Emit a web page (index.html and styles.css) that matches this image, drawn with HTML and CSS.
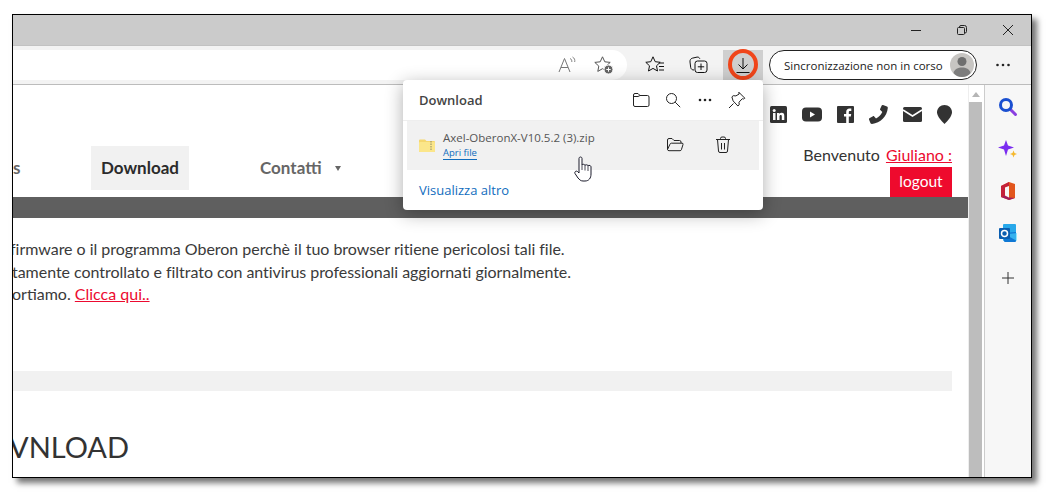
FILE: index.html
```html
<!DOCTYPE html>
<html lang="it">
<head>
<meta charset="utf-8">
<title>Download</title>
<link rel="stylesheet" href="styles.css">
</head>
<body>
<div class="window">
  <div class="titlebar">
    <span class="winbtn"><svg width="12" height="12" viewBox="0 0 12 12"><path d="M1 6.500h10" stroke="#222" fill="none"/></svg></span>
    <span class="winbtn"><svg width="12" height="12" viewBox="0 0 12 12"><path d="M1.500 4.500a1 1 0 0 1 1-1h5a1 1 0 0 1 1 1v5a1 1 0 0 1-1 1h-5a1 1 0 0 1-1-1zM3.500 3.500v-.5a1.500 1.500 0 0 1 1.500-1.500h3.500a2 2 0 0 1 2 2v4a1.500 1.500 0 0 1-1.500 1.500h-.5" stroke="#222" fill="none"/></svg></span>
    <span class="winbtn"><svg width="12" height="12" viewBox="0 0 12 12"><path d="M1 1l10 10M11 1L1 11" stroke="#222" fill="none"/></svg></span>
  </div>
  <div class="toolbar">
    <div class="omnibox">
      <span class="omni-btn"><svg width="22" height="20" viewBox="0 0 22 20" fill="none" stroke="#777"><path d="M2 17L7.500 3.500 13 17M4 12.500h7"/><path d="M13 3.500c1.500.5 2 2 1.800 3.500M15.500 2c2 1 2.600 3 2.200 5" stroke-width=".9"/></svg></span>
      <span class="omni-btn"><svg width="22" height="20" viewBox="0 0 22 20" fill="none"><path d="M9.500 1.800l2.300 5 5.400.6-4 3.700 1 5.300-4.700-2.700-4.700 2.700 1-5.300-4-3.700 5.400-.6z" stroke="#555"/><circle cx="15.500" cy="14.500" r="4.500" fill="#666" stroke="#fff"/><path d="M15.500 12.300v4.400M13.300 14.500h4.400" stroke="#fff"/></svg></span>
    </div>
    <span class="tool-btn"><svg width="20" height="18" viewBox="0 0 20 18" fill="none" stroke="#111"><path d="M8 .8l2.200 4.900 5 .6-3.700 3.500 1 5.200L8 12.400 3.500 15l1-5.200L.8 6.300l5-.6z"/><path d="M14 7h5M14 10.500h5M14 14h5"/></svg></span>
    <span class="tool-btn"><svg width="20" height="18" viewBox="0 0 20 18" fill="none" stroke="#111"><path d="M5 14c-2 0-3-1-3.300-2.500L1 6c-.2-2 .6-3.300 2.300-3.800L8 1.100c1.300-.2 2.400.4 2.800 1.600"/><rect x="6" y="5" width="12" height="11.500" rx="2.500"/><path d="M12 7.500v6.500M8.800 10.800h6.400"/></svg></span>
    <span class="tool-btn is-active">
      <svg width="20" height="20" viewBox="0 0 20 20" fill="none" stroke="#111"><path d="M10 3v11M5.500 9.500L10 14l4.500-4.500M3.500 17.500h13"/></svg>
      <span class="ring"></span>
    </span>
    <div class="sync">
      <span class="sync-label">Sincronizzazione non in corso</span>
      <span class="avatar"><svg width="24" height="24" viewBox="0 0 24 24"><circle cx="12" cy="12" r="12" fill="#c7c5c2"/><circle cx="12" cy="8.500" r="4.500" fill="#6f6f6f"/><path d="M3.500 20c1-4 4.500-5.500 8.500-5.500s7.500 1.500 8.500 5.500c-2 2.500-5 4-8.500 4s-6.500-1.500-8.500-4z" fill="#7d7d7d"/></svg></span>
    </div>
    <span class="tool-btn"><svg width="16" height="4" viewBox="0 0 16 4"><circle cx="2.500" cy="2" r="1.300" fill="#222"/><circle cx="8" cy="2" r="1.300" fill="#222"/><circle cx="13.500" cy="2" r="1.300" fill="#222"/></svg></span>
  </div>

  <div class="body">
    <main class="page">
      <div class="socials">
        <svg class="soc" width="17" height="17" viewBox="0 0 17 17"><rect width="17" height="17" rx="1.500" fill="#333"/><rect x="3" y="7" width="2.500" height="7" fill="#fff"/><circle cx="4.200" cy="4.500" r="1.500" fill="#fff"/><path d="M7 7h2.400v1c.5-.8 1.300-1.200 2.300-1.200 1.900 0 2.600 1.200 2.600 3.200v4h-2.500v-3.600c0-1-.3-1.500-1.100-1.500s-1.200.6-1.200 1.500V14H7z" fill="#fff"/></svg>
        <svg class="soc" width="20" height="15" viewBox="0 0 20 15"><rect width="20" height="14" y=".5" rx="4" fill="#333"/><path d="M8 4.500l5 3-5 3z" fill="#fff"/></svg>
        <svg class="soc" width="17" height="17" viewBox="0 0 17 17"><rect width="17" height="17" rx="1" fill="#333"/><path d="M9.200 17v-6.500H7V8h2.200V6c0-2.200 1.300-3.400 3.300-3.400h1.800V5H13c-.9 0-1.200.5-1.200 1.200V8h2.400l-.4 2.500h-2V17z" fill="#fff"/></svg>
        <svg class="soc" width="19" height="19" viewBox="0 0 19 19"><path d="M14 0l4 1.500c.6.300.9.800.8 1.500C18 11.500 11.500 18 3 19c-.7 0-1.200-.3-1.500-.8L0 14.500c-.2-.5 0-1 .4-1.300l3.600-2c.4-.2.900-.1 1.200.2l1.800 2c2.800-1.300 5-3.700 6.300-6.500l-2-1.800c-.3-.3-.4-.8-.2-1.200L12.700.5c.3-.4.800-.6 1.300-.5z" fill="#333"/></svg>
        <svg class="soc" width="19" height="15" viewBox="0 0 19 15"><rect width="19" height="15" rx="1.500" fill="#333"/><path d="M0 3l9.500 6L19 3" fill="none" stroke="#fff" stroke-width="1.500"/></svg>
        <svg class="soc" width="15" height="19" viewBox="0 0 15 19"><path d="M7.500 0C11.600 0 15 3.200 15 7.300c0 4-4.500 8.800-7.500 11.700C4.500 16.100 0 11.300 0 7.300 0 3.200 3.400 0 7.500 0z" fill="#333"/></svg>
      </div>
      <div class="masthead">
        <nav class="nav">
          <a class="nav-frag">s</a>
          <a class="nav-item is-current">Download</a>
          <a class="nav-item nav-contact">Contatti <span class="caret"></span></a>
        </nav>
        <div class="user">
          <div class="welcome">Benvenuto <a class="link">Giuliano :</a></div>
          <a class="logout">logout</a>
        </div>
      </div>
      <div class="darkbar"></div>
      <div class="notice">
        <div class="line line-1">firmware o il programma Oberon perchè il tuo browser ritiene pericolosi tali file.</div>
        <div class="line line-2">tamente controllato e filtrato con antivirus professionali aggiornati giornalmente.</div>
        <div class="line line-3">ortiamo. <a class="link">Clicca qui..</a></div>
      </div>
      <div class="greybar"></div>
      <h1 class="heading">VNLOAD</h1>
    </main>
    <div class="scrollbar">
      <span class="arrow"></span>
      <span class="thumb"></span>
    </div>
    <aside class="sidebar">
      <svg width="20" height="20" viewBox="0 0 20 20" fill="none"><path d="M12 12l5.500 5.500" stroke="#8b3fe0" stroke-width="3" stroke-linecap="round"/><circle cx="8" cy="8" r="5.500" stroke="#1a4fd0" stroke-width="3"/></svg>
      <svg width="20" height="20" viewBox="0 0 20 20"><path d="M8 1l2 5.500L16 8.500 10 10.500 8 17l-2-6.500L0 8.500 6 6.500z" fill="#7a2cf0"/><path d="M15.500 11.500l1 2.500 2.500 1-2.500 1-1 2.500-1-2.500-2.500-1 2.500-1z" fill="#f5b82e"/></svg>
      <svg width="20" height="20" viewBox="0 0 20 20"><path d="M11 1l6 2v14l-6 2-8-3V5z" fill="#e2561d"/><path d="M11 1L3 5v11l4-1.500V6.500L11 5z" fill="#c4213a"/><path d="M3 16l8 3 6-2-6-.5-4-2z" fill="#a01a5c"/><path d="M7 6.500L11 5v11.500l-4-2z" fill="#f7f7f7"/></svg>
      <svg width="20" height="20" viewBox="0 0 20 20"><rect x="5" y="1" width="13" height="17" rx="1" fill="#28a8ea"/><path d="M6 10l12-1v9a1 1 0 0 1-1 1H7a1 1 0 0 1-1-1z" fill="#0f78d4"/><path d="M10 11l9-1v8l-9-5z" fill="#50d9ff" opacity=".6"/><rect x="1" y="5" width="11" height="11" rx="1" fill="#0a5eb0"/><circle cx="6.500" cy="10.500" r="3" fill="none" stroke="#fff" stroke-width="1.500"/></svg>
      <svg width="14" height="14" viewBox="0 0 14 14"><path d="M7 1v12M1 7h12" stroke="#333" fill="none"/></svg>
    </aside>
  </div>

  <section class="popup">
    <header class="popup-head">
      <span class="popup-title">Download</span>
      <span class="pop-btn"><svg width="18" height="16" viewBox="0 0 18 16" fill="none" stroke="#222"><path d="M1.500 4V3a1.500 1.500 0 0 1 1.500-1.500h3L8 3.500h7.500A1.500 1.500 0 0 1 17 5v8a1.500 1.500 0 0 1-1.500 1.500H3A1.500 1.500 0 0 1 1.500 13z"/><path d="M1.500 4.500H6L8 3.500"/></svg></span>
      <span class="pop-btn"><svg width="16" height="16" viewBox="0 0 16 16" fill="none" stroke="#222"><circle cx="6.500" cy="6.500" r="5"/><path d="M10.200 10.200l5 5"/></svg></span>
      <span class="pop-btn"><svg width="14" height="4" viewBox="0 0 14 4"><circle cx="2" cy="2" r="1.300" fill="#222"/><circle cx="7" cy="2" r="1.300" fill="#222"/><circle cx="12" cy="2" r="1.300" fill="#222"/></svg></span>
      <span class="pop-btn"><svg width="18" height="18" viewBox="0 0 18 18" fill="none" stroke="#222"><path d="M10.800 1.200l6 6-1.200.8-1.300-.3-3.300 3.500.2 2.600-1.300 1.200L5.200 10l-.1-.1-1.200-4 1.300-1.200 2.700.2L11.200 3l-.4-1.800zM5.500 12.500L1 17"/></svg></span>
    </header>
    <div class="dl-row">
      <svg class="zip" width="16" height="14" viewBox="0 0 16 14"><path d="M0 2.500A1 1 0 0 1 1 1.500h5l1.500 1.500H15a1 1 0 0 1 1 1V13a1 1 0 0 1-1 1H1a1 1 0 0 1-1-1z" fill="#f5d76e"/><rect x="0" y="4" width="16" height="10" rx="1" fill="#fbe68a"/><path d="M12 3v10" stroke="#8a8a6a" stroke-dasharray="1.500 1"/></svg>
      <div class="dl-info">
        <div class="dl-name">Axel-OberonX-V10.5.2 (3).zip</div>
        <a class="dl-open">Apri file</a>
      </div>
      <span class="row-btn"><svg width="18" height="15" viewBox="0 0 18 15" fill="none" stroke="#222"><path d="M1.500 12.500V3A1.500 1.500 0 0 1 3 1.500h3l2 2h5.500A1.500 1.500 0 0 1 15 5v1"/><path d="M1.500 12.500L4 7.200A1.500 1.500 0 0 1 5.300 6.200H16a1 1 0 0 1 1 1.300l-1.600 5.200a1.500 1.500 0 0 1-1.400 1H3a1.500 1.500 0 0 1-1.500-1.200z"/></svg></span>
      <span class="row-btn"><svg width="16" height="18" viewBox="0 0 16 18" fill="none" stroke="#222"><path d="M1 3.500h14M5.500 3.500V2.500A1.500 1.500 0 0 1 7 1h2a1.500 1.500 0 0 1 1.500 1.500v1M2.500 3.500l1 11.500A1.500 1.500 0 0 0 5 16.500h6a1.500 1.500 0 0 0 1.500-1.500l1-11.500M6.500 7v6.500M9.500 7v6.500"/></svg></span>
    </div>
    <a class="more">Visualizza altro</a>
    <svg class="hand" width="18" height="26" viewBox="0 0 18 26"><path d="M5 2.500C5 .5 8 .5 8 2.500V9C8 8 11 8 11 9.500 11 8.500 14 8.500 14 10 14 9 17 9 17 11V18C17 22 15 25 11 25H9C6.500 25 5.500 23.500 4 22L1 17.500C0 15.500 2.500 14.500 3.500 15.500L5 17Z" fill="#fff" stroke="#1a1a2a" stroke-linejoin="round"/><path d="M8 9v5M11 9.500v5M14 10v5" fill="none" stroke="#1a1a2a" stroke-width=".8"/></svg>
  </section>
</div>
</body>
</html>
```

FILE: styles.css
```css
* { box-sizing: border-box; }
html, body { margin: 0; height: 100%; background: #fff; overflow: hidden; }
body { padding: 14px 0 0 12px; font-family: "Lato", "Liberation Sans", sans-serif; color: #333; }

.window {
  position: relative;
  width: 1020px;
  height: 464px;
  border: 1px solid #000;
  display: flex;
  flex-direction: column;
  box-shadow: 5px 5px 6px rgba(0, 0, 0, .55);
  background: #fff;
}

.titlebar {
  height: 31px;
  background: #cbcbcb;
  border-bottom: 1px solid #c2c2c2;
  display: flex;
  justify-content: flex-end;
  flex: none;
}
.winbtn { width: 46px; display: flex; align-items: center; justify-content: center; }

.toolbar {
  height: 39px;
  flex: none;
  background: #f3f3f3;
  border-bottom: 1px solid #bcbcbc;
  padding: 4px 8px 4px 0;
  display: flex;
  align-items: flex-start;
  gap: 4px;
}
.omnibox {
  width: 614px;
  height: 30px;
  margin-right: 4px;
  background: #fff;
  border-radius: 0 15px 15px 0;
  display: flex;
  justify-content: flex-end;
  align-items: center;
  padding-right: 5px;
}
.omni-btn { width: 36px; height: 30px; display: flex; align-items: center; justify-content: center; }
.tool-btn { position: relative; width: 40px; height: 30px; display: flex; align-items: center; justify-content: center; flex: none; }
.tool-btn.is-active { background: #cfcfcf; }
.ring {
  position: absolute;
  left: 5px;
  top: -1px;
  width: 30px;
  height: 31px;
  border: 4px solid #f0451a;
  border-radius: 50%;
}
.sync {
  width: 208px;
  height: 30px;
  margin: 0 2px;
  border: 1px solid #222;
  border-radius: 15px;
  background: #fff;
  display: flex;
  align-items: center;
  justify-content: space-between;
  padding: 0 2px 0 14px;
  font-family: "Open Sans", "Liberation Sans", sans-serif;
  font-size: 11.5px;
  color: #222;
  white-space: nowrap;
}
.avatar { display: flex; }

.body { flex: 1; min-height: 0; display: flex; }
.page { width: 955px; flex: none; overflow: hidden; background: #fff; }

.socials {
  height: 38px;
  padding: 21px 16px 0 0;
  display: flex;
  justify-content: flex-end;
  align-items: center;
  gap: 15px;
}
.soc { flex: none; }

.masthead { margin-top: 23px; height: 51px; display: flex; justify-content: space-between; padding-right: 16px; }
.nav { display: flex; align-items: flex-start; font-size: 17px; font-weight: 700; color: #666; }
.nav-frag { width: 78px; height: 44px; line-height: 44px; }
.nav-item { height: 44px; line-height: 44px; padding: 0 10px; }
.nav-item.is-current { background: #f1f1f1; color: #2b2b2b; width: 98px; }
.nav-contact { margin-left: 61px; }
.caret {
  display: inline-block;
  margin-left: 9px;
  vertical-align: 3px;
  border-left: 3.500px solid transparent;
  border-right: 3.500px solid transparent;
  border-top: 5px solid #666;
}
.user { display: flex; flex-direction: column; align-items: flex-end; font-size: 16px; }
.welcome { height: 21px; line-height: 18px; white-space: pre; }
.link { color: #ec0a30; text-decoration: underline; }
.welcome .link { margin-left: 2px; }
.logout { width: 62px; height: 30px; line-height: 29px; text-align: center; background: #ee0a2d; color: #fff; font-size: 15.500px; }

.darkbar { height: 21px; background: #5f5f5f; }

.notice { margin-top: 20px; font-size: 16px; line-height: 22.500px; white-space: nowrap; color: #3a3a3a; }
.line-1 { margin-left: -3px; letter-spacing: -.03px; }
.line-2 { margin-left: -1px; letter-spacing: -.04px; }
.line-3 { margin-left: -1px; }

.greybar { margin-top: 65px; margin-right: 16px; height: 20px; background: #f1f1f1; }
.heading { margin: 38px 0 0 -4px; font-size: 29px; line-height: 36px; font-weight: 400; color: #333; white-space: nowrap; }

.scrollbar {
  width: 17px;
  flex: none;
  background: #fff;
  border-left: 1px solid #eee;
  border-right: 1px solid #ccc;
  display: flex;
  flex-direction: column;
  align-items: flex-start;
}
.arrow { width: 0; height: 0; margin: 7px 0 5px 3px; border-left: 4px solid transparent; border-right: 4px solid transparent; border-bottom: 5px solid #b5b5b5; flex: none; }
.thumb { width: 13px; flex: 1; background: #bdbdbd; }

.sidebar {
  flex: 1;
  background: #f7f7f7;
  display: flex;
  flex-direction: column;
  align-items: center;
  padding-top: 12px;
  gap: 22px;
}
.sidebar svg { flex: none; }
.sidebar svg:last-child { margin-top: 6px; }

.popup {
  position: absolute;
  left: 390px;
  top: 65px;
  width: 360px;
  height: 130px;
  background: #fff;
  border-radius: 4px;
  box-shadow: 0 4px 18px rgba(0, 0, 0, .32);
  display: flex;
  flex-direction: column;
}
.popup-head { height: 41px; flex: none; padding: 0 10px 0 16px; display: flex; align-items: center; border-bottom: 1px solid #eee; font-family: "Open Sans", "Liberation Sans", sans-serif; }
.popup-title { flex: 1; font-size: 13px; font-weight: 600; color: #444; }
.pop-btn { width: 32px; height: 32px; display: flex; align-items: center; justify-content: center; }
.dl-row { margin: 0 4px; height: 49px; flex: none; background: #f1f1f1; display: flex; align-items: center; padding: 0 0 2px 12px; font-family: "Open Sans", "Liberation Sans", sans-serif; }
.zip { flex: none; margin-right: 8px; }
.dl-info { flex: 1; min-width: 0; }
.dl-name { font-size: 11.500px; line-height: 16px; color: #555; white-space: nowrap; }
.dl-open { display: block; width: fit-content; font-size: 9.500px; line-height: 13px; color: #0f6cbd; border-bottom: 1px solid #0f6cbd; }
.row-btn { width: 48px; height: 40px; display: flex; align-items: center; justify-content: center; }
.row-btn:last-child { margin-right: 12px; }
.more { margin: 12px 0 0 16px; font-family: "Open Sans", "Liberation Sans", sans-serif; font-size: 13px; line-height: 17px; color: #0f6cbd; }
.hand { position: absolute; left: 171px; top: 76px; }
```
